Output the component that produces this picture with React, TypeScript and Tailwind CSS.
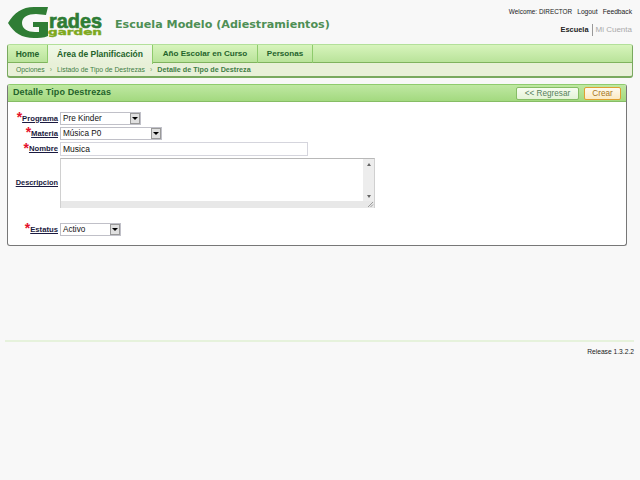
import React from "react";

function Logo() {
  return (
    <svg width="98" height="36" viewBox="0 0 98 36" className="block">
      <path d="M0 16 C6 6 14 0 26 0 L40 0 L38 8 L28 7 C20 7 14 10 14 16 C14 22 20 25 27 25 L31 25 L31 20 L25 20 L25 15 L40 15 L40 29 C36 31 30 31 26 31 C14 31 6 26 0 16 Z" fill="#2f7d35" />
      <text x="41" y="21" textLength="53" lengthAdjust="spacingAndGlyphs" fontFamily="Liberation Sans" fontWeight="700" fontSize="21" fill="#2f7d35" stroke="#2f7d35" strokeWidth="0.7">rades</text>
      <text x="40" y="28" textLength="54" lengthAdjust="spacingAndGlyphs" fontFamily="DejaVu Sans" fontWeight="700" fontSize="9" fill="#7ea81e" stroke="#7ea81e" strokeWidth="0.4">garden</text>
    </svg>
  );
}

function Label({ children, req, size = "text-[7.7px]" }: { children: string; req?: boolean; size?: string }) {
  return (
    <div className="w-[50px] flex justify-end items-center shrink-0 mr-[2px]">
      {req && <span className="text-[#e5102c] text-[14px] leading-[10px] font-bold relative top-[-1px]">*</span>}
      <span className={`underline font-bold ${size} text-[#1a1a40] whitespace-nowrap`}>{children}</span>
    </div>
  );
}

function Sel({ w, children }: { w: string; children: string }) {
  return (
    <div className={`${w} h-[13px] border border-[#c0c0c8] bg-white flex items-center justify-between`}>
      <span className="pl-[2px] pt-[1px] text-[8.2px] text-[#111]">{children}</span>
      <span className="w-[10px] h-[11px] bg-[#e0e0e0] border border-[#999] flex items-center justify-center">
        <span className="w-0 h-0 border-l-[3px] border-r-[3px] border-t-[3px] border-l-transparent border-r-transparent border-t-black" />
      </span>
    </div>
  );
}

function Tab({ children, active, w, size = "text-[8.5px]" }: { children: string; active?: boolean; w: string; size?: string }) {
  return (
    <div className={`${w} flex items-center justify-center border-r border-[#8ecb6c] font-bold ${size} text-[#24632b] ${active ? "bg-gradient-to-b from-[#f0f9e8] to-[#e8f0d8] h-[19px]" : "h-[18px]"}`}>
      {children}
    </div>
  );
}

export default function App() {
  return (
    <div className="w-[640px] h-[480px] bg-[#f8f8f8] overflow-hidden font-['Liberation_Sans',sans-serif] flex flex-col">
      <div className="h-[44px] flex shrink-0">
        <div className="pl-[8px] pt-[7px] w-[115px] shrink-0"><Logo /></div>
        <div className="pt-[16px] font-['DejaVu_Sans',sans-serif] font-bold text-[11.15px] leading-[18px] text-[#4e8f55] whitespace-nowrap">Escuela Modelo (Adiestramientos)</div>
        <div className="ml-auto pr-[8px] pt-[6px] flex flex-col items-end">
          <div className="flex text-[6.7px] leading-[12px] text-[#222] gap-[5px] whitespace-nowrap">
            <span className="text-[6.4px]">Welcome: DIRECTOR</span><span>Logout</span><span>Feedback</span>
          </div>
          <div className="flex items-center mt-[6px] text-[7.4px] leading-[12px] font-bold whitespace-nowrap">
            <span className="text-[#222] pr-[3px] border-r border-[#999]">Escuela</span>
            <span className="text-[#aaa] pl-[3px] font-normal text-[8px]">Mi Cuenta</span>
          </div>
        </div>
      </div>

      <div className="mx-[7px] h-[34px] shrink-0 rounded-[3px] border border-[#79a95f] border-t-[#b3e09a] border-b-2 overflow-hidden bg-[#e8f0d8]">
        <div className="h-[18px] flex bg-gradient-to-b from-[#d7f4bc] to-[#b9e39a] border-b border-[#7fb35e]">
          <Tab w="w-[40px]">Home</Tab>
          <Tab w="w-[105px]" active>Área de Planificación</Tab>
          <Tab w="w-[105px]" size="text-[8.1px]">Año Escolar en Curso</Tab>
          <Tab w="w-[55px]" size="text-[8.1px]">Personas</Tab>
        </div>
        <div className="h-[14px] flex items-center pl-[8px] pt-[1px] text-[6.8px] text-[#3f7d45] whitespace-nowrap">
          <span>Opciones</span>
          <span className="mx-[5px] text-[#7aa36b]">›</span>
          <span>Listado de Tipo de Destrezas</span>
          <span className="mx-[5px] text-[#7aa36b]">›</span>
          <span className="font-bold text-[7.2px]">Detalle de Tipo de Destreza</span>
        </div>
      </div>

      <div className="mx-[7px] mt-[6px] w-[620px] h-[162px] shrink-0 rounded-[3px] border border-[#777] border-t-[#8fcc6e] bg-white overflow-hidden">
        <div className="h-[17px] flex items-center justify-between bg-gradient-to-b from-[#bfe8a2] to-[#a3d97f] border-b border-[#86bd65] pl-[5px] pr-[5px]">
          <span className="font-bold text-[9px] text-[#24632b] tracking-[0.1px]">Detalle Tipo Destrezas</span>
          <div className="flex gap-[5px]">
            <div className="w-[63px] h-[13px] rounded-[2px] border border-[#86bd65] bg-gradient-to-b from-[#f8fcf2] to-[#e4f3d6] text-[8.2px] leading-[11px] text-center text-[#55805a]">&lt;&lt; Regresar</div>
            <div className="w-[37px] h-[13px] rounded-[2px] border border-[#e0a030] bg-gradient-to-b from-[#fefaf0] to-[#fbeac4] text-[8.2px] leading-[11px] text-center text-[#a8761a]">Crear</div>
          </div>
        </div>
        <div className="pt-[9px] flex flex-col">
          <div className="flex items-center h-[15px]">
            <Label req>Programa</Label>
            <Sel w="w-[81px]">Pre Kinder</Sel>
          </div>
          <div className="flex items-center h-[15px]">
            <Label req>Materia</Label>
            <Sel w="w-[102px]">Música P0</Sel>
          </div>
          <div className="flex items-center h-[16px]">
            <Label req>Nombre</Label>
            <div className="w-[248px] h-[14px] border border-[#d5d5dd] text-[8.5px] leading-[12px] pl-[2px] text-[#111]">Musica</div>
          </div>
          <div className="flex items-center h-[50px] mt-[1px]">
            <Label size="text-[7.4px]">Descripcion</Label>
            <div className="w-[315px] h-[50px] border border-[#d0d0d0] border-t-[#b8b8b8] border-b-0 relative bg-white">
              <div className="absolute right-0 top-0 bottom-0 w-[11px] bg-[#ededed] flex flex-col justify-between items-center py-[4px]">
                <span className="w-0 h-0 border-l-[2px] border-r-[2px] border-b-[3px] border-l-transparent border-r-transparent border-b-[#666]" />
                <span className="w-0 h-0 border-l-[2px] border-r-[2px] border-t-[3px] border-l-transparent border-r-transparent border-t-[#666] mb-[6px]" />
              </div>
              <div className="absolute left-0 right-0 bottom-0 h-[7px] bg-[#e8e8e8]" />
              <svg width="7" height="7" viewBox="0 0 7 7" className="absolute right-0 bottom-0">
                <path d="M1 6 L6 1 M3.5 6 L6 3.5" stroke="#888" strokeWidth="0.8" />
              </svg>
            </div>
          </div>
          <div className="flex items-center h-[15px] mt-[14px]">
            <Label req>Estatus</Label>
            <Sel w="w-[61px]">Activo</Sel>
          </div>
        </div>
      </div>

      <div className="mx-[5px] mt-[94px] w-[629px] border-t-2 border-[#e6f2dc] shrink-0" />
      <div className="w-[634px] text-right text-[6.7px] leading-[10px] mt-[5px] text-[#222]">Release 1.3.2.2</div>
    </div>
  );
}
